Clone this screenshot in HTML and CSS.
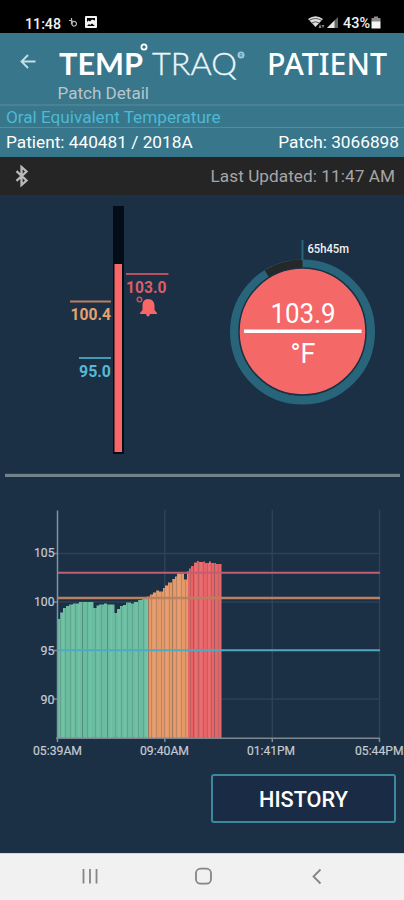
FILE: index.html
```html
<!DOCTYPE html>
<html lang="en">
<head>
<meta charset="utf-8">
<meta name="viewport" content="width=device-width">
<title>TempTraq Patient – Patch Detail</title>
<link rel="stylesheet" href="styles.css">
</head>
<body>
<div class="phone">
  <div class="status">
    <svg width="404" height="33" viewBox="0 0 404 33">
      <text class="clock" x="25" y="28.5" textLength="36" lengthAdjust="spacingAndGlyphs">11:48</text>
      <path class="thin" d="M69 20.500h3.500M71.500 18v6.500M73 21.500c4-1 4.500 4 1.500 4.500c-3 .5-3-3-1.500-4.500z"/>
      <path fill="#f3f3f3" fill-rule="evenodd" d="M86 16h10q1 0 1 1v10q0 1-1 1h-10q-1 0-1-1v-10q0-1 1-1zM87 18v4l1.500-1.500l1.500 1l2-2l3 1v-2.500zM87 26h8l-3-2.500l-2 1.500l-1-1z"/>
      <path fill="#ddd" d="M308 19q7.500-5.500 15 0l-7.500 8z"/>
      <path class="wifi-gap" d="M309 20.500q6.500-4 13 0M311.500 23q4-2.500 8 0"/>
      <path fill="#888" d="M320 24l1.500 4h-3zM323 28l-1.500-3h3z"/>
      <path fill="#666" d="M338 17v11h-11z"/>
      <path fill="#e5e5e5" d="M334.500 20.500v7.500h-7.500z"/>
      <text class="battery" x="343" y="28" textLength="27" lengthAdjust="spacingAndGlyphs">43%</text>
      <path fill="#8c8c8c" d="M374 16.500h4v1.500h2.500v4h-9v-4h2.500z"/>
      <path fill="#f5f5f5" d="M371.500 21.500h9v7h-9z"/>
    </svg>
  </div>
  <header class="header">
    <div class="brand">
      <svg width="404" height="72" viewBox="0 33 404 72">
        <path class="back" d="M35.500 61.500h-14M28 55l-6.500 6.500l6.500 6.500"/>
        <text class="logo-bold" x="59" y="75" textLength="84" lengthAdjust="spacingAndGlyphs">TEMP</text>
        <circle class="degree" cx="144" cy="47" r="2.600"/>
        <text class="logo-light" x="152" y="75" textLength="85" lengthAdjust="spacingAndGlyphs">TRAQ</text>
        <circle cx="241" cy="55" r="3.500" fill="#a3c9d8"/>
        <text class="reg" x="241" y="57" text-anchor="middle">R</text>
        <text class="logo-patient" x="267" y="74.500" textLength="120" lengthAdjust="spacingAndGlyphs">PATIENT</text>
        <text class="subtitle" x="57.500" y="99" textLength="91.500" lengthAdjust="spacingAndGlyphs">Patch Detail</text>
      </svg>
    </div>
    <div class="mode"><span>Oral Equivalent Temperature</span></div>
    <div class="ids"><span>Patient: 440481 / 2018A</span><span>Patch: 3066898</span></div>
  </header>
  <div class="update">
    <svg width="16" height="22" viewBox="0 0 16 22"><path class="bt" d="M2.500 6.200l10 9.300l-5 4.500v-18l5 4.500l-10 9.300"/></svg>
    <span>Last Updated: 11:47 AM</span>
  </div>
  <main class="main">
    <div class="gauges">
      <svg width="404" height="278" viewBox="0 195 404 278">
        <rect x="113" y="206" width="11" height="248" fill="#020d18"/>
        <rect x="114.500" y="264" width="7.500" height="188" fill="#f96667"/>
        <path stroke="#b9505f" stroke-width="2" d="M126 274h42.500"/>
        <text class="level red" x="126" y="293" textLength="40.500" lengthAdjust="spacingAndGlyphs">103.0</text>
        <circle cx="139.500" cy="299.500" r="2.300" fill="none" stroke="#c3515f" stroke-width="1.500"/>
        <path fill="#f96667" d="M148 299c4.500 0 6.500 3 6.500 7v4l2.500 3v1h-17v-1l2.500-3v-4c0-4 1.500-7 5.500-7zM146 314h4q-.5 2.500-2 2.500t-2-2.500z"/>
        <path stroke="#bd7f60" stroke-width="2" d="M70 301.500h41"/>
        <text class="level orange" x="70.500" y="320.300" textLength="40.500" lengthAdjust="spacingAndGlyphs">100.4</text>
        <path stroke="#3e9bb5" stroke-width="2" d="M79 358h32"/>
        <text class="level blue" x="79" y="377" textLength="32" lengthAdjust="spacingAndGlyphs">95.0</text>
        <circle cx="302.500" cy="332" r="68" fill="none" stroke="#28657b" stroke-width="9"/>
        <path fill="none" stroke="#242829" stroke-width="9" d="M267 274A68 68 0 0 1 302.500 264"/>
        <circle cx="302.500" cy="331.500" r="63.500" fill="#f46867" stroke="#193142" stroke-width="1.500"/>
        <path stroke="#28657b" stroke-width="2" d="M302.500 240v20"/>
        <text class="remain" x="307.500" y="253.300" textLength="41.500" lengthAdjust="spacingAndGlyphs">65h45m</text>
        <text class="temp" x="270.500" y="323" textLength="65" lengthAdjust="spacingAndGlyphs">103.9</text>
        <path stroke="#fff" stroke-width="3.500" d="M244 331.300h117.500"/>
        <text class="temp" x="290.500" y="362.500" textLength="25" lengthAdjust="spacingAndGlyphs">°F</text>
      </svg>
    </div>
    <div class="divider"></div>
    <div class="chart">
      <svg width="404" height="289" viewBox="0 477 404 289">
        <defs>
          <clipPath id="area"><path d="M57.500 738V619H60V612.500H63V608H66V606H69V604.500H73V603.500H79V602H93.500V608H96.500V605.500H99V604.500H104V603.500H107V604.500H114.500V613H117V609H120V606H123V605H126V602.500H131V603.500H134V602H138V600H142V599H147V596.500H150V594.500H153V592.500H156V590.500H159V591.500H163V588H165V585.500H168V582.500H172V579H175V576.500H177V573.500H184V579.500H187V571.500H189V568.500H191V566H194V562.500H197V561H199V562H203V561.500H205V563H209V561.500H211V563H216V564H221.500V738Z"/></clipPath>
        </defs>
        <path class="grid" d="M164.800 510v228M272.300 510v228M379.500 510v228M58 553.500h322M58 602h322M58 699h322"/>
        <g clip-path="url(#area)">
          <rect x="57" y="550" width="90" height="188" fill="#6cbda0"/>
          <rect x="147" y="550" width="41" height="188" fill="#e4996a"/>
          <rect x="188" y="550" width="34" height="188" fill="#e76768"/>
          <path class="dark-stripe" d="M60.500 555v183M65.500 555v183M70.500 555v183M75.500 555v183M82.500 555v183M87.500 555v183M95.500 555v183M101.500 555v183M107.500 555v183M115.500 555v183M121.500 555v183M127.500 555v183M132.500 555v183M138.500 555v183M143.500 555v183M148.500 555v183M151.500 555v183M156.500 555v183M161.500 555v183M164.500 555v183M169.500 555v183M172.500 555v183M176.500 555v183M181.500 555v183M185.500 555v183M190.500 555v183M193.500 555v183M198.500 555v183M203.500 555v183M207.500 555v183M211.500 555v183M214.500 555v183M218.500 555v183"/>
          <path class="deep-stripe" d="M82.500 555v183M107.500 555v183M148.500 555v183M172.500 555v183M193.500 555v183M214.500 555v183"/>
          <path class="light-stripe" d="M63 555v183M73 555v183M79 555v183M90 555v183M98 555v183M111 555v183M119 555v183M125 555v183M136 555v183M146 555v183M154 555v183M167 555v183M179 555v183M196 555v183M201 555v183M209 555v183"/>
        </g>
        <path stroke="#7896a3" stroke-width="1.500" d="M57.500 510.500V742"/>
        <path stroke="#c45d70" stroke-width="2" d="M58 572.700H380"/>
        <path stroke="#bd805f" stroke-width="2.500" d="M58 598H380"/>
        <path stroke="#4fa9c0" stroke-width="2" d="M58 650.300H380"/>
        <path class="axis" d="M56 738.300H380M164.800 738v4M272.300 738v4M379.500 738v4M54 553.500h3M54 602h3M54 650.500h3M54 699h3"/>
        <g class="labels">
          <text x="34" y="557.300" textLength="20.500" lengthAdjust="spacingAndGlyphs">105</text>
          <text x="34" y="606.300" textLength="20.500" lengthAdjust="spacingAndGlyphs">100</text>
          <text x="40.500" y="655" textLength="14" lengthAdjust="spacingAndGlyphs">95</text>
          <text x="40.500" y="703.500" textLength="14" lengthAdjust="spacingAndGlyphs">90</text>
          <text x="33" y="755" textLength="49" lengthAdjust="spacingAndGlyphs">05:39AM</text>
          <text x="140" y="755" textLength="49" lengthAdjust="spacingAndGlyphs">09:40AM</text>
          <text x="247" y="755" textLength="48" lengthAdjust="spacingAndGlyphs">01:41PM</text>
          <text x="355" y="755" textLength="48.500" lengthAdjust="spacingAndGlyphs">05:44PM</text>
        </g>
      </svg>
    </div>
    <div class="actions"><button class="history"><span>HISTORY</span></button></div>
  </main>
  <nav class="nav">
    <svg width="404" height="47" viewBox="0 854 404 47">
      <path d="M83.500 869v14.500M90 869v14.500M96.500 869v14.500"/>
      <rect x="196" y="868.700" width="15" height="15" rx="4.500"/>
      <path d="M320.500 869.500l-7 7l7 7"/>
    </svg>
  </nav>
</div>
</body>
</html>
```
FILE: styles.css
```css
* { box-sizing: border-box; }
body { margin: 0; background: #1b2f45; font-family: Roboto, sans-serif; }
svg { display: block; flex: none; }
.phone { width: 404px; height: 900px; display: flex; flex-direction: column; overflow: hidden; }
.status { height: 33px; background: #000; }
.clock, .battery { fill: #f2f2f2; font-size: 15.5px; font-weight: 500; }
.battery { font-size: 15px; }
.thin { fill: none; stroke: #bbb; stroke-width: 1.2; }
.wifi-gap { fill: none; stroke: #333; stroke-width: 0.8; }

.header { height: 124px; background: #37768b; display: flex; flex-direction: column; }
.brand { height: 71px; overflow: hidden; }
.back { fill: none; stroke: #c5e0ea; stroke-width: 1.8; }
.logo-bold { font: 700 31px Lato, sans-serif; fill: #fff; }
.logo-light { font: 300 31px Lato, sans-serif; fill: #e9f6fa; stroke: #e9f6fa; stroke-width: 0.35; }
.logo-patient { font: 500 30px "Noto Sans", sans-serif; fill: #fff; }
.degree { fill: none; stroke: #fff; stroke-width: 1.8; }
.reg { font-size: 5px; fill: #37768b; }
.subtitle { font-size: 17px; fill: #b9c6cc; }
.mode { height: 24px; display: flex; align-items: center; padding: 0 6px; border-top: 2px solid #4c8194; border-bottom: 1px solid #5b8a9c; color: #4db9d3; font-size: 17.2px; letter-spacing: -0.02px; }
.ids { flex: 1; display: flex; align-items: center; justify-content: space-between; padding: 0 5px 2px 6px; color: #fff; font-size: 17.25px; white-space: nowrap; }

.update { height: 38px; background: #252525; display: flex; align-items: center; justify-content: space-between; padding: 0 9px 0 14px; color: #a6a6a6; font-size: 17.2px; letter-spacing: 0.05px; }
.bt { fill: none; stroke: #b9b9b9; stroke-width: 2.3; }

.main { height: 658px; display: flex; flex-direction: column; background: #1b2f45; }
.gauges { height: 278px; }
.level { font-size: 16.5px; font-weight: 700; }
.red { fill: #d95e68; }
.orange { fill: #e5a06f; }
.blue { fill: #55b9d2; }
.remain { font-size: 12px; font-weight: 500; fill: #f3f3f3; }
.temp { font-size: 27.5px; fill: #fff; }
.divider { height: 4px; margin: 0 4px 0 5px; background: #72838c; border-top: 1px solid #253f50; }
.chart { height: 289px; }
.grid { fill: none; stroke: #2d4257; stroke-width: 1.5; }
.dark-stripe { stroke: #39444c; stroke-width: 1; opacity: 0.2; }
.deep-stripe { stroke: #39444c; stroke-width: 1; opacity: 0.22; }
.light-stripe { stroke: #fff; stroke-width: 1; opacity: 0.12; }
.axis { fill: none; stroke: #7d8891; stroke-width: 1.5; }
.labels { font-size: 12.5px; fill: #c4cbd1; stroke: #c4cbd1; stroke-width: 0.2; }
.actions { display: flex; justify-content: flex-end; padding: 8px 8px 0 0; }
.history { width: 185px; height: 49px; padding: 2px 0 0; border: 2px solid #3b899c; border-radius: 3px; background: #1a2c45; color: #fff; font: 500 21.7px Roboto, sans-serif; }
.nav { height: 47px; background: #f1f1f1; border-top: 1px solid #d4d8dc; }
.nav path, .nav rect { fill: none; stroke: #858585; stroke-width: 1.8; }
```
